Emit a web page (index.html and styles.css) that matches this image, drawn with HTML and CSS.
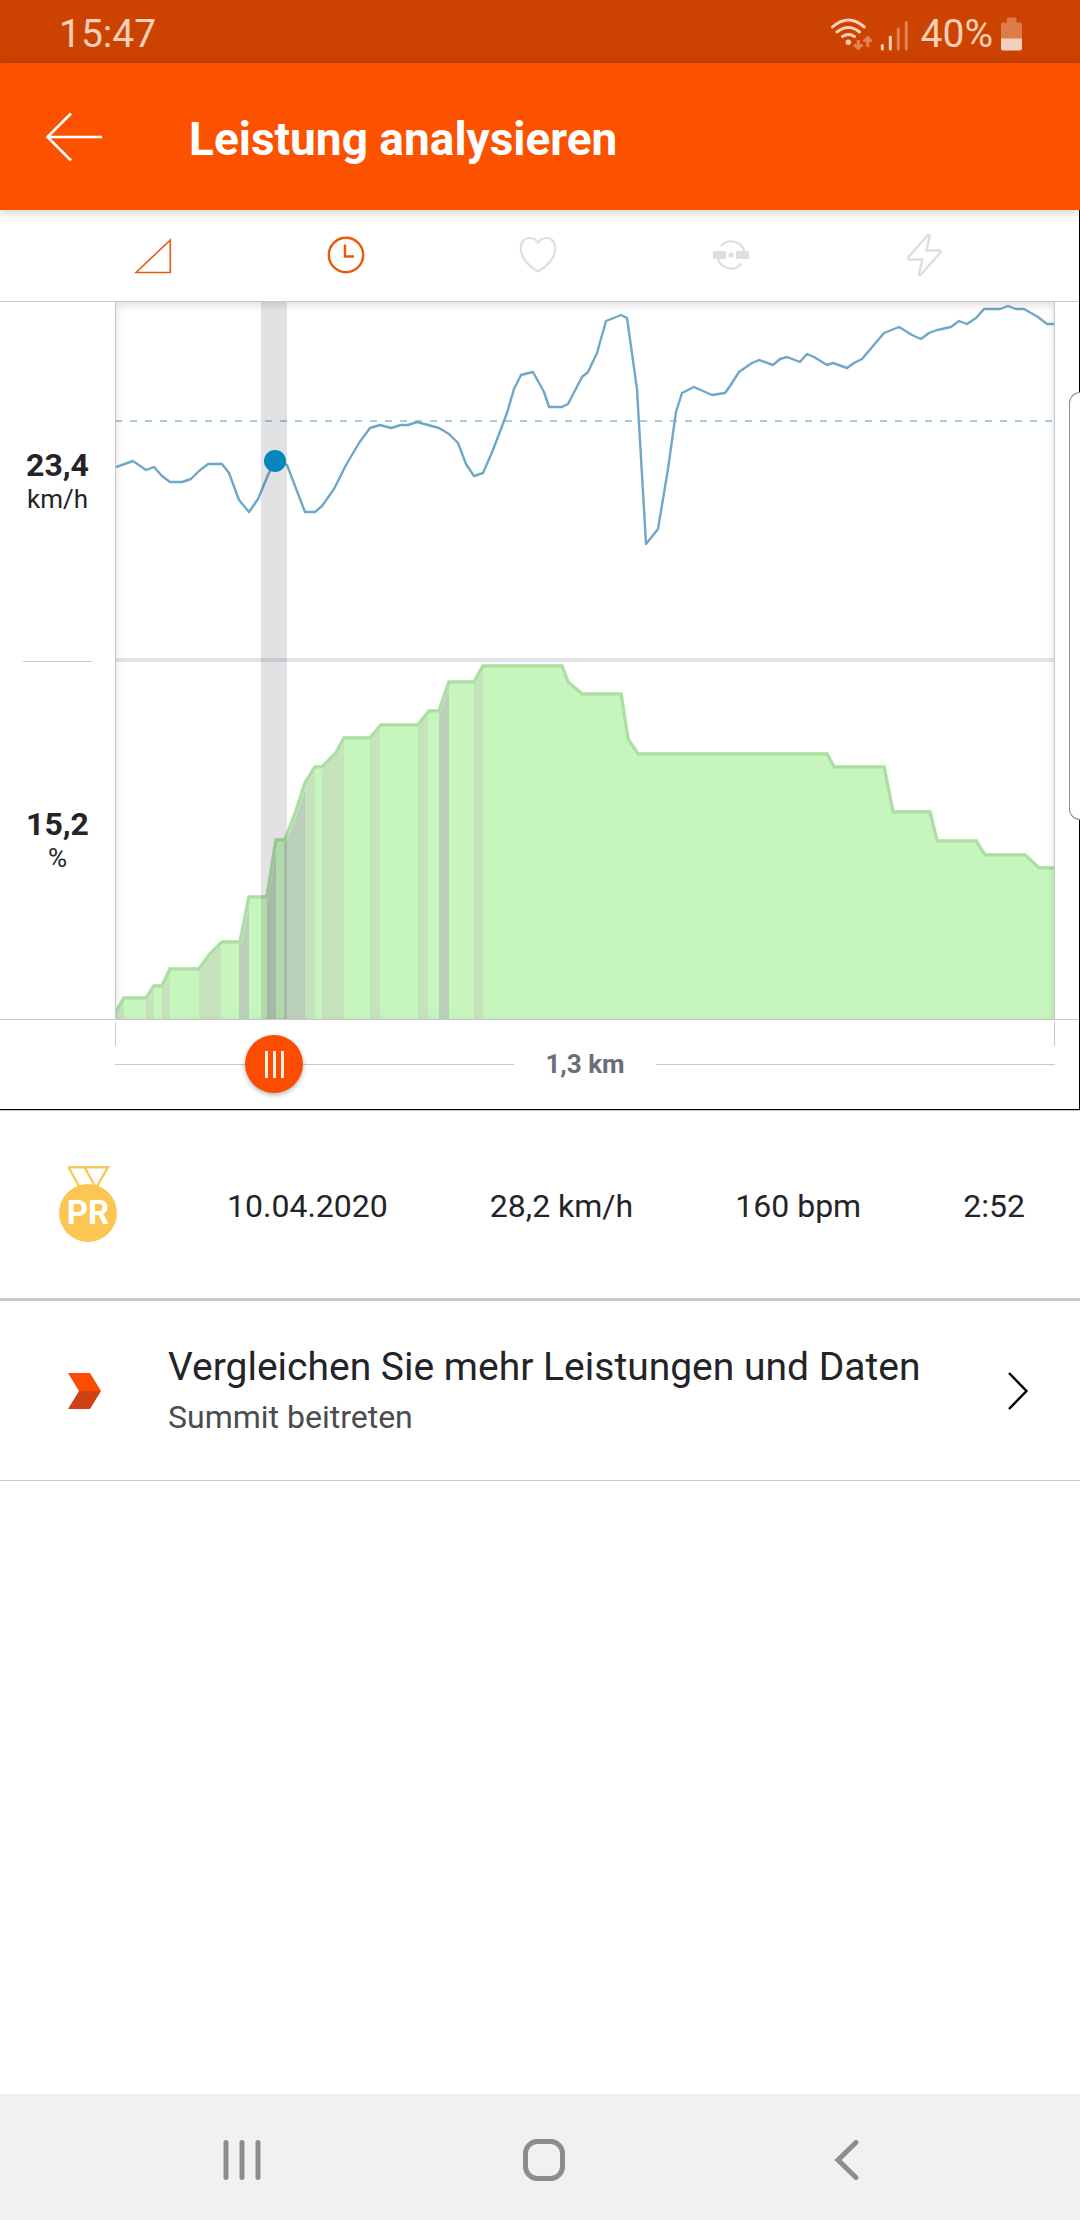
FILE: index.html
```html
<!DOCTYPE html>
<html lang="de">
<head>
<meta charset="utf-8">
<meta name="viewport" content="width=device-width, initial-scale=1">
<title>Leistung analysieren</title>
<link rel="stylesheet" href="styles.css">
</head>
<body>
<div class="status-bar">
  <span class="status-text">15:47</span>
  <div class="status-icons">
    <svg class="icon" width="79" height="34" viewBox="827 14 79 34" aria-hidden="true">
      <g fill="none" stroke="#fccfb7" stroke-width="3" stroke-linecap="round">
        <path d="M829.500 24Q845.300 10 861.300 24M834 29Q845.300 20 856.500 29M839.500 33.500Q845.300 29.500 851.500 33.500"/>
      </g>
      <circle cx="845.300" cy="39.300" r="2.700" fill="#fccfb7"/>
      <g fill="none" stroke="#df8558" stroke-width="3">
        <path d="M855.300 37v9M851.300 41.500l4 4 4-4M864.700 44v-9M860.700 38.500l4-4 4 4"/>
      </g>
      <g fill="none" stroke-width="3" stroke-linecap="round">
        <path stroke="#fccfb7" d="M879.300 42.500v3.500M887.300 34v12"/>
        <path stroke="#df8558" d="M895.300 26v20M903.300 19.500V46"/>
      </g>
    </svg>
    <span class="status-text">40%</span>
    <svg class="icon" width="21" height="34" viewBox="0 0 21 34" aria-hidden="true">
      <path fill="#dd7c4b" d="M6 1.500Q6 .5 7 .5h7.500Q15.500 .5 15.500 1.500V5.500H19Q21 5.500 21 7.500V22H0V7.500Q0 5.500 2 5.500H6z"/>
      <path fill="#f4cfbd" d="M0 21.500h21v10q0 2-2 2H2q-2 0-2-2z"/>
    </svg>
  </div>
</div>

<header class="app-bar">
  <button class="icon-button" type="button" aria-label="Zurück">
    <svg class="icon" width="58" height="52" viewBox="0 0 58 52"><path fill="none" stroke="#fff" stroke-width="2.600" d="M57 26H2M26 2.500L2.500 26 26 49.500"/></svg>
  </button>
  <h1 class="app-title">Leistung analysieren</h1>
</header>

<main class="content">
  <section class="analysis">
    <nav class="metrics" aria-label="Messwerte">
      <button class="icon-button" type="button" aria-label="Steigung">
        <svg class="icon" width="44" height="44" viewBox="0 0 44 44"><path fill="none" stroke="#e8590f" stroke-width="1.600" d="M5 39.500L39.300 7v32.500z"/></svg>
      </button>
      <button class="icon-button" type="button" aria-label="Tempo">
        <svg class="icon" width="44" height="44" viewBox="0 0 44 44"><g fill="none" stroke="#e8590f" stroke-width="2.400"><circle cx="22" cy="22" r="17.200"/><path d="M21 11.500v12h9"/></g></svg>
      </button>
      <button class="icon-button" type="button" aria-label="Herzfrequenz">
        <svg class="icon" width="44" height="44" viewBox="0 0 44 44"><path fill="none" stroke="#dedede" stroke-width="2.200" stroke-linejoin="round" d="M22 38.500C13 33.500 4.800 25 4.800 15.500C4.800 9 8.500 5 13.500 5C17.500 5 20.500 7 22 10C23.500 7 26.500 5 30.500 5C35.500 5 39.200 9 39.200 15.500C39.200 25 31 33.500 22 38.500z"/></svg>
      </button>
      <button class="icon-button" type="button" aria-label="Trittfrequenz">
        <svg class="icon" width="44" height="44" viewBox="0 0 44 44"><g fill="#dedede"><rect x="4" y="18" width="13" height="8" rx="1"/><rect x="27" y="18" width="13" height="8" rx="1"/><circle cx="22" cy="22" r="2.600"/></g><path fill="none" stroke="#dedede" stroke-width="2.200" stroke-linecap="round" d="M12.500 12.500A13.500 13.500 0 0 1 35.200 18M9 26A13.500 13.500 0 0 0 32 31"/></svg>
      </button>
      <button class="icon-button" type="button" aria-label="Leistung in Watt">
        <svg class="icon" width="44" height="44" viewBox="0 0 44 44"><path fill="none" stroke="#dedede" stroke-width="2.400" stroke-linejoin="round" d="M25.500 2.500Q28 .8 27.500 4L24.500 17.500H37Q39.500 17.500 38 20L19.500 41Q17 43.500 17 40.500L20.500 26.500H7.500Q5 26.500 6.500 24z"/></svg>
      </button>
    </nav>

    <div class="chart">
      <div class="readouts">
        <p class="readout"><strong class="readout-value">23,4</strong><span class="readout-unit">km/h</span></p>
        <p class="readout"><strong class="readout-value">15,2</strong><span class="readout-unit">%</span></p>
      </div>
      <div class="plot">
        <svg class="plot-drawing" viewBox="116 302 938 717" preserveAspectRatio="none" role="img" aria-label="Geschwindigkeit und Steigung">
          <defs>
            <path id="ridge" d="M116 1012L124 998H146L154 986H162L170 969H199L210 954L222 942H240L249 897H267L276 840H285L296 811L305 783L315 767H322L336 753L344 738H370L381 725H418L429 711H439L449 682H474L483 666H562L568 682L582 694H621L628 739L638 754H827L834 767H884L893 812H930L937 841H976L985 855H1025L1039 868H1056V1024H112V1014z"/>
            <clipPath id="ridge-clip"><use href="#ridge"/></clipPath>
          </defs>
          <path fill="#e4e2e6" d="M116 658H1054V662H116z"/>
          <use href="#ridge" fill="#c6f6bd"/>
          <g clip-path="url(#ridge-clip)">
            <path fill="#c6e3bd" d="M116 600h8v419h-8zM146 600h8v419h-8zM162 600h8v419h-8zM199 600h22v419h-22zM305 600h10v419h-10zM322 600h22v419h-22zM370 600h10v419h-10zM418 600h10v419h-10zM474 600h9v419h-9z"/>
            <path fill="#bad0bb" d="M239 600h10v419h-10zM267 600h9v419h-9zM284 600h21v419h-21zM439 600h10v419h-10z"/>
          </g>
          <use href="#ridge" fill="none" stroke="#c6f6bd" stroke-width="4"/>
          <use href="#ridge" fill="none" stroke="#65965f" stroke-opacity=".26" stroke-width="3"/>
          <path stroke="#9fd0e6" stroke-width="2" stroke-dasharray="7 8" d="M115 421H1054"/>
          <path fill="none" stroke="#6fa8c6" stroke-width="2.400" stroke-linejoin="round" d="M116 467L133 461L146 470L154 467L162 476L170 482H182L191 479L199 471L208 464H222L229 473L239 500L249 512L258 499L268 475L275 461L287 465L305 512H315L322 506L334 489L346 465L359 443L370 428L380 425L391 428L401 425H408L417 422L439 428L449 434L458 443L466 464L474 476L483 473L493 450L507 413L514 389L521 375L533 372L544 392L549 407H562L568 404L582 377L588 372L597 353L606 321L621 315L627 318L637 389L646 544L658 529L668 469L676 412L682 393L694 387L712 395L725 393L730 386L739 372L752 363L759 360L773 365L780 359L787 357L800 362L807 354L814 357L827 365L833 363L847 368L854 363L862 359L884 333L899 327L912 335L921 339L929 333L937 330L951 327L959 321L967 324L976 318L984 309H1000L1008 306L1016 309H1024L1038 317L1047 324H1054"/>
          <path fill="#232332" fill-opacity=".135" d="M261 302H287V1019H261z"/>
          <circle cx="275" cy="461" r="11" fill="#0385be"/>
        </svg>
      </div>
    </div>

    <div class="distance">
      <div class="distance-ends"></div>
      <div class="distance-track">
        <label class="distance-label" for="position">1,3 km</label>
        <input class="distance-range" id="position" type="range" min="0" max="1000" value="147">
      </div>
    </div>
    <div class="edge-handle"></div>
  </section>

  <section class="effort">
    <svg class="icon" width="60" height="79" viewBox="58 1166 60 79" role="img" aria-label="Persönlicher Rekord">
      <path fill="none" stroke="#f7c95f" stroke-width="2.400" d="M68.500 1168.200H108L96 1189M68.500 1168.200L79.500 1188M84.500 1168.200L95.500 1188"/>
      <circle cx="88" cy="1214" r="29" fill="#fcc654"/>
      <text class="medal-text" x="88" y="1224.500" text-anchor="middle">PR</text>
    </svg>
    <ul class="effort-values">
      <li>10.04.2020</li>
      <li>28,2 km/h</li>
      <li>160 bpm</li>
      <li>2:52</li>
    </ul>
  </section>

  <a class="promo" href="#summit">
    <svg class="icon" width="34" height="38" viewBox="0 0 34 38" aria-hidden="true"><path fill="#fc4c02" d="M0 1H22L33 19H11z"/><path fill="#d04015" d="M11 19H33L22 37H0z"/></svg>
    <span class="promo-copy">
      <span class="promo-title">Vergleichen Sie mehr Leistungen und Daten</span>
      <span class="promo-subtitle">Summit beitreten</span>
    </span>
    <svg class="icon" width="22" height="40" viewBox="0 0 22 40" aria-hidden="true"><path fill="none" stroke="#000" stroke-width="2.400" d="M2 2L19.500 20 2 38"/></svg>
  </a>
</main>

<nav class="system-nav" aria-label="System">
  <button class="icon-button" type="button" aria-label="Letzte Apps">
    <svg class="icon" width="44" height="44" viewBox="0 0 44 44"><path stroke="#8d8d8d" stroke-width="5" stroke-linecap="round" d="M6 4.500v35M22 4.500v35M38 4.500v35"/></svg>
  </button>
  <button class="icon-button" type="button" aria-label="Startseite">
    <svg class="icon" width="44" height="44" viewBox="0 0 44 44"><rect x="3.500" y="3.500" width="37" height="37" rx="12" fill="none" stroke="#8d8d8d" stroke-width="5"/></svg>
  </button>
  <button class="icon-button" type="button" aria-label="Zurück">
    <svg class="icon" width="44" height="44" viewBox="0 0 44 44"><path fill="none" stroke="#8d8d8d" stroke-width="5" stroke-linecap="round" d="M31 4.500L13 22l18 17.500"/></svg>
  </button>
</nav>
</body>
</html>
```

FILE: styles.css
```css
* {
  box-sizing: border-box;
}

body {
  margin: 0;
  min-height: 100vh;
  display: flex;
  flex-direction: column;
  background: #fff;
  color: #242428;
  font-family: Roboto, "Noto Sans", sans-serif;
  font-size: 32px;
}

.icon {
  display: block;
  flex: none;
}

.icon-button {
  display: flex;
  align-items: center;
  justify-content: center;
  padding: 0;
  border: 0;
  background: none;
  cursor: pointer;
}

/* Status bar */
.status-bar {
  display: flex;
  align-items: center;
  justify-content: space-between;
  height: 63px;
  padding: 5px 58px 0 59px;
  background: #cc4200;
}

.status-icons {
  display: flex;
  align-items: center;
  gap: 12px;
}

.status-icons .status-text {
  margin-right: -4px;
}

.status-text {
  color: #fccfb7;
  font-size: 39px;
  line-height: 48px;
}

/* App bar */
.app-bar {
  position: relative;
  z-index: 1;
  display: flex;
  align-items: center;
  gap: 86px;
  height: 147px;
  padding: 0 45px;
  background: #fc5200;
  box-shadow: 0 2px 10px rgba(0, 0, 0, .2);
}

.app-title {
  margin: 4px 0 0;
  color: #fff;
  font-size: 46px;
  font-weight: 700;
  line-height: 56px;
}

.content {
  flex: 1;
}

/* Chart card */
.analysis {
  position: relative;
  border-right: 1px solid #000;
  border-bottom: 1px solid #000;
}

.metrics {
  display: grid;
  grid-template-columns: repeat(5, 1fr);
  height: 92px;
  padding: 0 59px 2px 57px;
  border-bottom: 1px solid #c8c8ca;
}

.chart {
  display: grid;
  grid-template-columns: 115px 1fr;
  padding-right: 24px;
  border-bottom: 1px solid #c8c8ca;
}

.readouts {
  display: grid;
  grid-template-rows: 1fr 1fr;
}

.readout {
  display: flex;
  flex-direction: column;
  align-items: center;
  justify-content: center;
  margin: 0 23px;
}

.readout + .readout {
  border-top: 1px solid #c8c8ca;
}

.readout-value {
  font-size: 32px;
  line-height: 36px;
}

.readout-unit {
  font-size: 26px;
  line-height: 32px;
}

.plot {
  position: relative;
  height: 717px;
  border: solid #c8c8ca;
  border-width: 0 1px;
}

.plot::after {
  content: "";
  position: absolute;
  inset: 0;
  box-shadow: inset 0 3px 9px rgba(60, 30, 60, .15);
  clip-path: inset(0);
  pointer-events: none;
}

.plot-drawing {
  display: block;
  width: 100%;
  height: 100%;
}

/* Distance slider */
.distance {
  padding: 2px 24px 21px 115px;
}

.distance-ends {
  height: 24px;
  border: solid #c8c8ca;
  border-width: 0 1px;
}

.distance-track {
  position: relative;
  display: flex;
  align-items: center;
  gap: 31px;
  height: 48px;
  margin-top: -6px;
}

.distance-track::before,
.distance-track::after {
  content: "";
  flex: 1;
  height: 1px;
  background: #c8c8ca;
}

.distance-label {
  color: #6d6d78;
  font-size: 26px;
  font-weight: 700;
  line-height: 32px;
}

.distance-range {
  position: absolute;
  inset: 0;
  width: 100%;
  height: 100%;
  margin: 0;
  background: none;
  appearance: none;
}

.distance-range::-webkit-slider-thumb {
  width: 58px;
  height: 58px;
  border-radius: 50%;
  appearance: none;
  background:
    linear-gradient(#fff0e0, #fff0e0) 20px 16px / 3px 27px no-repeat,
    linear-gradient(#fff0e0, #fff0e0) 28px 16px / 3px 27px no-repeat,
    linear-gradient(#fff0e0, #fff0e0) 36px 16px / 3px 27px no-repeat,
    #fc4c02;
  box-shadow: 0 2px 5px rgba(0, 0, 0, .3);
}

.edge-handle {
  position: absolute;
  top: 182px;
  right: -1px;
  width: 11px;
  height: 428px;
  border: 1px solid #8e8e8e;
  border-right: 0;
  border-radius: 11px 0 0 11px;
  background: #fff;
}

/* Effort row */
.effort {
  display: flex;
  align-items: center;
  gap: 109px;
  height: 191px;
  padding: 0 55px 0 58px;
  border-top: 1px solid #c8c8ca;
  border-bottom: 3px solid #c8c8ca;
}

.medal-text {
  fill: #fff;
  font-size: 33px;
  font-weight: 700;
}

.effort-values {
  flex: 1;
  display: flex;
  justify-content: space-between;
  margin: 0;
  padding: 3px 0 0;
  list-style: none;
  line-height: 40px;
}

/* Summit promo */
.promo {
  display: flex;
  align-items: center;
  height: 180px;
  padding: 0 51px 0 68px;
  border-bottom: 1px solid #c8c8ca;
  color: inherit;
  text-decoration: none;
}

.promo-copy {
  flex: 1;
  display: flex;
  flex-direction: column;
  gap: 4px;
  padding-left: 66px;
}

.promo-title {
  font-size: 39px;
  line-height: 48px;
}

.promo-subtitle {
  color: #4b4b50;
  font-size: 32px;
  line-height: 44px;
}

/* System navigation */
.system-nav {
  display: grid;
  grid-template-columns: repeat(3, 1fr);
  height: 126px;
  padding: 6px 82px 0 91px;
  background: #f1f1f1;
}
```
